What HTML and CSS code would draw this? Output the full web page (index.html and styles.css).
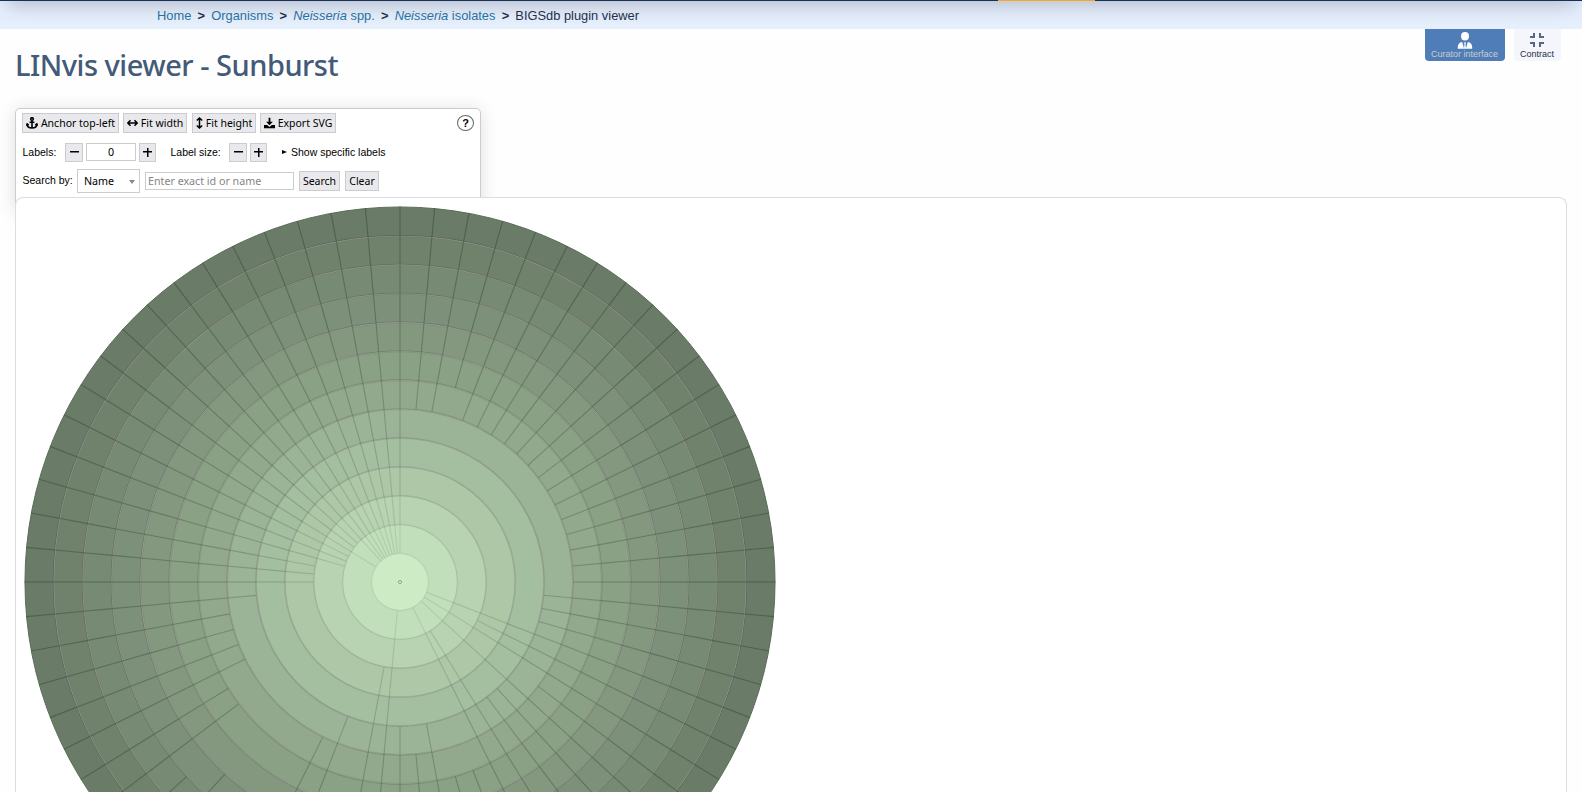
FILE: index.html
```html
<!DOCTYPE html>
<html lang="en">
<head>
    <meta charset="UTF-8">
    <meta name="viewport" content="width=device-width, initial-scale=1.0">
    <title>BIGSdb plugin viewer</title>
    <link rel="stylesheet" href="styles.css">
</head>
<body>
    <header class="site-header"><div class="active-tab"></div></header>
    <nav class="breadcrumb">
        <a href="#">Home</a><b>&gt;</b>
        <a href="#">Organisms</a><b>&gt;</b>
        <a href="#"><i>Neisseria</i> spp.</a><b>&gt;</b>
        <a href="#"><i>Neisseria</i> isolates</a><b>&gt;</b>
        <span>BIGSdb plugin viewer</span>
    </nav>

    <div class="title-row">
        <h1>LINvis viewer - Sunburst</h1>
        <div class="page-links">
            <a class="page-link curator" href="#">
                <svg width="16" height="17" viewBox="0 0 16 17" fill="#fff">
                    <ellipse cx="8" cy="4.2" rx="4" ry="4.2"/>
                    <path d="M.8 16.8v-1.6c0-3 1.8-4.9 4.4-5.2L7 16.2l.5-4-.6-1.7h2.2l-.6 1.7.5 4L10.8 10c2.600.3 4.400 2.200 4.400 5.200v1.600z"/>
                </svg>
                <span>Curator interface</span>
            </a>
            <a class="page-link contract" href="#">
                <svg width="14" height="14" viewBox="0 0 14 14" fill="none" stroke="#5a6680" stroke-width="2">
                    <path d="M4 0v4H0M10 0v4h4M0 10h4v4M14 10h-4v4"/>
                </svg>
                <span>Contract</span>
            </a>
        </div>
    </div>

    <div class="controls">
        <div class="control-row row-actions">
            <button class="btn anchor">
                <svg width="12" height="12" viewBox="0 0 12 12" fill="none" stroke="#000" stroke-width="1.600">
                    <circle cx="6" cy="2" r="1.300"/><path d="M6 3.300V11M3.600 5.200h4.800M1 7.200C1.200 9.600 3.200 11 6 11s4.800-1.400 5-3.800M.2 8.600 1.200 7l1.600 1.200M11.800 8.600 10.800 7 9.200 8.200"/>
                </svg>Anchor top-left</button>
            <button class="btn width">
                <svg width="11" height="12" viewBox="0 0 11 12" fill="none" stroke="#000" stroke-width="1.500">
                    <path d="M1 6h9M3.500 3.200.9 6l2.600 2.800M7.500 3.200 10.100 6 7.500 8.800"/>
                </svg>Fit width</button>
            <button class="btn height">
                <svg width="7" height="12" viewBox="0 0 7 12" fill="none" stroke="#000" stroke-width="1.500">
                    <path d="M3.500 1v10M.8 3.500 3.500 1l2.700 2.500M.8 8.500 3.500 11l2.700-2.500"/>
                </svg>Fit height</button>
            <button class="btn export">
                <svg width="11" height="12" viewBox="0 0 11 12">
                    <path d="M4.600.8h1.800v4h2.500L5.500 8.300 2.100 4.800h2.500zM0 8h3.200l2.300 2 2.300-2H11v3.300H0z"/>
                </svg>Export SVG</button>
            <span class="help">?</span>
        </div>
        <div class="control-row row-labels">
            <label>Labels:</label>
            <button class="btn step minus"><span></span></button>
            <input class="count" type="text" value="0">
            <button class="btn step plus"><span></span></button>
            <label class="size-label">Label size:</label>
            <button class="btn step minus"><span></span></button>
            <button class="btn step plus"><span></span></button>
            <div class="specific"><span class="marker"></span>Show specific labels</div>
        </div>
        <div class="control-row row-search">
            <label>Search by:</label>
            <div class="select">Name<span class="caret"></span></div>
            <input class="term" type="text" placeholder="Enter exact id or name">
            <button class="btn search">Search</button>
            <button class="btn clear">Clear</button>
        </div>
    </div>

    <main class="chart">
        <svg id="sunburst" width="752" height="752" viewBox="-376 -376 752 752"></svg>
    </main>

    <script src="sunburst.js"></script>
</body>
</html>
```

FILE: styles.css
```css
body {
    margin: 0;
    height: 792px;
    overflow: hidden;
    background: #fefefe;
    font-family: "Liberation Sans", Arial, sans-serif;
    color: #000;
    display: flex;
    flex-direction: column;
}

a {
    text-decoration: none;
}

.site-header {
    height: 60px;
    margin-top: -59px;
    flex: none;
    position: relative;
    display: flex;
    align-items: flex-end;
    background: #18315b;
    box-shadow: 0 10px 20px -6px rgba(50, 45, 70, 0.28);
}

.active-tab {
    width: 97px;
    height: 1px;
    margin-left: 998px;
    background: #f9a825;
}

.breadcrumb {
    height: 28px;
    flex: none;
    box-sizing: border-box;
    padding: 1px 0 0 157px;
    display: flex;
    align-items: center;
    white-space: pre;
    font-size: 12.86px;
    color: #1f2f4f;
    background: #e6f0fd;
}

.breadcrumb a {
    color: #2874a6;
}

.breadcrumb b {
    margin: 0 6.2px;
}

.title-row {
    height: 79px;
    flex: none;
    display: flex;
    justify-content: space-between;
    align-items: flex-start;
}

h1 {
    margin: 15px 0 0 15px;
    font: 500 29px/41px "Noto Sans", sans-serif;
    letter-spacing: -0.49px;
    color: #435a78;
    white-space: nowrap;
}

.page-links {
    display: flex;
    gap: 9px;
    margin-right: 21px;
}

.page-link {
    height: 32px;
    box-sizing: border-box;
    border-radius: 0 0 4px 4px;
    display: flex;
    flex-direction: column;
    align-items: center;
    font-size: 9px;
    line-height: 10px;
    white-space: nowrap;
}

.page-link span {
    margin-top: auto;
    margin-bottom: 2px;
}

.curator {
    width: 80px;
    padding: 3px 1px 0 0;
    background: #4e7db8;
    color: #ccc;
}

.contract {
    width: 47px;
    padding: 4px 1px 0 0;
    background: #f4f6fb;
    color: #263042;
}

.controls {
    width: 466px;
    height: 104px;
    flex: none;
    box-sizing: border-box;
    margin-left: 15px;
    padding: 4px 6px 0;
    border: 1px solid #ccc;
    border-radius: 5px;
    background: #fff;
    box-shadow: 0 2px 18px rgba(0, 0, 0, 0.13);
    font-size: 10.5px;
}

.control-row {
    display: flex;
    align-items: center;
}

.row-actions {
    height: 20px;
    gap: 4px;
}

.row-labels {
    height: 20px;
    margin-top: 9px;
    gap: 3px;
}

.row-search {
    height: 24px;
    margin-top: 7px;
    gap: 5px;
}

.btn {
    height: 20px;
    flex: none;
    box-sizing: border-box;
    padding: 0;
    display: flex;
    align-items: center;
    justify-content: center;
    gap: 3px;
    border: 1px solid #ccc;
    background: #e9e9ed;
    color: #000;
    font: 10.5px "Noto Sans", sans-serif;
    white-space: nowrap;
}

.anchor { width: 97px; }
.width { width: 64px; }
.height { width: 64px; margin-left: 1px; }
.export { width: 76px; }
.search { width: 41px; }
.clear { width: 34px; }

.help {
    width: 15px;
    height: 14px;
    margin-left: auto;
    border: 1px solid #666;
    border-radius: 50%;
    text-align: center;
    font: bold 11px/14px "Liberation Sans", sans-serif;
}

label {
    flex: none;
    box-sizing: border-box;
    padding-left: 0.5px;
    white-space: nowrap;
}

.row-labels label {
    width: 40px;
}

.row-labels .size-label {
    width: 56px;
    margin-left: 11px;
}

.step {
    width: 18px;
    height: 19px;
}

.plus {
    width: 17px;
}

.step span {
    width: 9px;
    height: 9px;
    background: linear-gradient(#000, #000) center / 9px 1.5px no-repeat;
}

.plus span {
    background: linear-gradient(#000, #000) center / 9px 1.5px no-repeat, linear-gradient(#000, #000) center / 1.5px 9px no-repeat;
}

input {
    box-sizing: border-box;
    height: 18px;
    border: 1px solid #ccc;
    padding: 1px 2px;
    background: #fff;
    font: 10.7px "Noto Sans", sans-serif;
}

input::placeholder {
    color: #858585;
}

.count {
    width: 50px;
    text-align: center;
}

.specific {
    margin-left: 12px;
    display: flex;
    align-items: center;
    gap: 4px;
}

.marker {
    border-left: 5px solid #000;
    border-top: 2.5px solid transparent;
    border-bottom: 2.5px solid transparent;
}

.row-search label {
    width: 50px;
    margin-top: -2px;
}

.select {
    width: 63px;
    height: 24px;
    box-sizing: border-box;
    padding: 0 4px 0 6px;
    display: flex;
    align-items: center;
    justify-content: space-between;
    border: 1px solid #ccc;
    background: #fff;
    font: 10.7px "Noto Sans", sans-serif;
}

.caret {
    margin-top: 2px;
    border-top: 4px solid #888;
    border-left: 3.5px solid transparent;
    border-right: 3.5px solid transparent;
}

.term {
    width: 149px;
}

.chart {
    flex: 1;
    min-height: 0;
    overflow: hidden;
    box-sizing: border-box;
    position: relative;
    margin: -15px 15px 0 15px;
    padding: 8px 8px 0;
    border: 1px solid #dadde4;
    border-bottom: none;
    border-radius: 8px 8px 0 0;
    background: #fff;
}

#sunburst {
    display: block;
}
```

FILE: sunburst.js
```javascript
const RING = 28.88;
const SECTORS = 68;
const colors = ['#cdebc5', '#c1dfba', '#b7d3b1', '#aec8a7', '#a4bea0', '#9bb397', '#92a98d',
    '#8aa185', '#84987f', '#7c907a', '#768a74', '#70826c', '#6a7b68'];

// First ring in which each sector boundary appears, clockwise from 12 o'clock
const starts = [
    1, 6, 6, 7, 6, 6, 6, 6, 6, 6, 6, 6, 6, 6, 6, 6, 6,
    6, 5, 5, 5, 1, 3, 1, 6, 1, 5, 5, 2, 1, 7, 7, 5, 6,
    5, 1, 3, 8, 5, 6, 9, 10, 9, 10, 7, 7, 6, 6, 6, 6, 5,
    3, 3, 3, 2, 2, 2, 1, 2, 2, 1, 1, 1, 1, 1, 1, 1, 1
];

const svg = document.getElementById('sunburst');

function add(name, attrs) {
    const el = document.createElementNS('http://www.w3.org/2000/svg', name);
    for (const key in attrs) {
        el.setAttribute(key, attrs[key]);
    }
    svg.appendChild(el);
}

for (let i = 12; i >= 0; i--) {
    const r = (i + 1) * RING;
    if (i < 12) {
        // dark outer edge, then a thin pale gap before the next ring in
        add('circle', { r: r + 0.5, fill: '#4d564b', 'fill-opacity': 0.03 + i * 0.05 });
        add('circle', { r: r - 0.2, fill: '#a5a59c', 'fill-opacity': Math.min(1, 0.2 + i * 0.1) });
    }
    add('circle', {
        r: i === 12 ? r - 0.4 : r - 0.9,
        fill: colors[i],
        stroke: i === 12 ? '#5b6c59' : '#666c60',
        'stroke-opacity': i === 12 ? 1 : i * 0.045,
        'stroke-width': i === 12 ? 1 : 0.7
    });
}

starts.forEach((start, k) => {
    const angle = k * 2 * Math.PI / SECTORS;
    for (let i = start; i < 13; i++) {
        add('line', {
            x1: Math.sin(angle) * i * RING,
            y1: -Math.cos(angle) * i * RING,
            x2: Math.sin(angle) * (i + 1) * RING,
            y2: -Math.cos(angle) * (i + 1) * RING,
            stroke: '#3c543c',
            'stroke-opacity': 0.09 + i * 0.044,
            'stroke-width': 1.1
        });
    }
});

add('circle', { r: 1.6, fill: 'none', stroke: '#7f9a7c', 'stroke-width': 0.8 });
```
